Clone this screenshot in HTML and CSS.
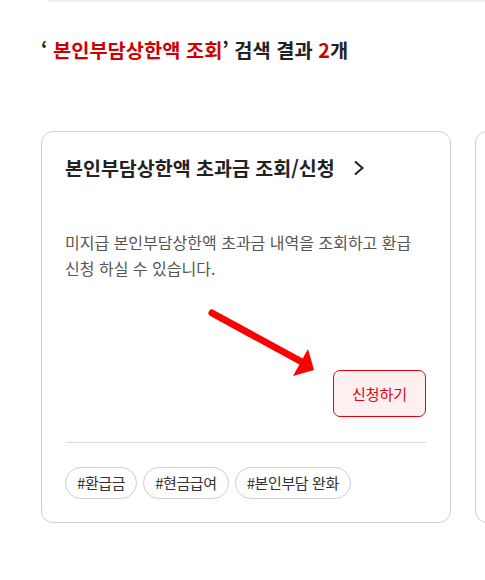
FILE: index.html
```html
<!DOCTYPE html>
<html lang="ko">
<head>
<meta charset="utf-8">
<link rel="stylesheet" href="styles.css">
</head>
<body>
<div class="topline"></div>
<h2 class="result-title">‘ <span class="red">본인부담상한액 조회</span>’ 검색 결과 <span class="red">2</span>개</h2>
<div class="cards">
  <div class="card">
    <div class="card-title">본인부담상한액 초과금 조회/신청
      <svg class="chev" width="12" height="16" viewBox="0 0 12 16"><path d="M2 1.5 L9.5 8 L2 14.5" fill="none" stroke="#222" stroke-width="2"/></svg>
    </div>
    <p class="desc">미지급 본인부담상한액 초과금 내역을 조회하고 환급 신청 하실 수 있습니다.</p>
    <div class="btn-row"><button class="apply">신청하기</button></div>
    <div class="divider"></div>
    <div class="tags">
      <span class="tag">#환급금</span>
      <span class="tag">#현금급여</span>
      <span class="tag">#본인부담 완화</span>
    </div>
    <svg class="arrow" width="115" height="75" viewBox="0 0 115 75">
      <line x1="6" y1="7" x2="96" y2="56" stroke="#ff0000" stroke-width="7" stroke-linecap="round"/>
      <polygon points="108,64 102,43 87,70" fill="#ff0000"/>
    </svg>
  </div>
  <div class="card"></div>
</div>
</body>
</html>
```

FILE: styles.css
```css
html, body {
  margin: 0;
  padding: 0;
  background: #fff;
  overflow: hidden;
}
body {
  font-family: "Noto Sans CJK KR", "Noto Sans", sans-serif;
  color: #222;
  width: 485px;
}
.topline {
  margin-left: 48px;
  height: 2px;
  background: #eef0f5;
}
.result-title {
  margin: 34px 0 0 41px;
  font-size: 19.8px;
  line-height: 28px;
  font-weight: 700;
  color: #222;
  letter-spacing: 0;
}
.red { color: #d10000; }
.cards {
  display: flex;
  gap: 24px;
  margin: 67px 0 0 41px;
}
.card {
  position: relative;
  flex: 0 0 410px;
  box-sizing: border-box;
  height: 392px;
  border: 1px solid #cfcfcf;
  border-radius: 12px;
  padding: 22px 24px 0 23px;
}
.card-title {
  display: flex;
  align-items: center;
  font-size: 19.5px;
  line-height: 28px;
  font-weight: 700;
  color: #222;
}
.chev { margin-left: 18px; }
.desc {
  margin: 47px 0 0;
  font-size: 16px;
  line-height: 26px;
  color: #555;
}
.btn-row {
  display: flex;
  justify-content: flex-end;
  margin-top: 89px;
}
.apply {
  width: 93px;
  height: 47px;
  box-sizing: border-box;
  border: 1px solid #e60012;
  border-radius: 7px;
  background: #fff0f0;
  color: #e60012;
  font-family: inherit;
  font-size: 15px;
  padding: 0;
}
.divider {
  height: 1px;
  background: #dadada;
  margin: 25px 0 0 1px;
}
.tags {
  display: flex;
  gap: 6px;
  margin-top: 24px;
}
.tag {
  box-sizing: border-box;
  height: 32px;
  line-height: 30px;
  border: 1px solid #cfcfcf;
  border-radius: 16px;
  padding: 0 11px;
  font-size: 15px;
  letter-spacing: -0.4px;
  color: #333;
}
.arrow {
  position: absolute;
  left: 164px;
  top: 174px;
}
```
